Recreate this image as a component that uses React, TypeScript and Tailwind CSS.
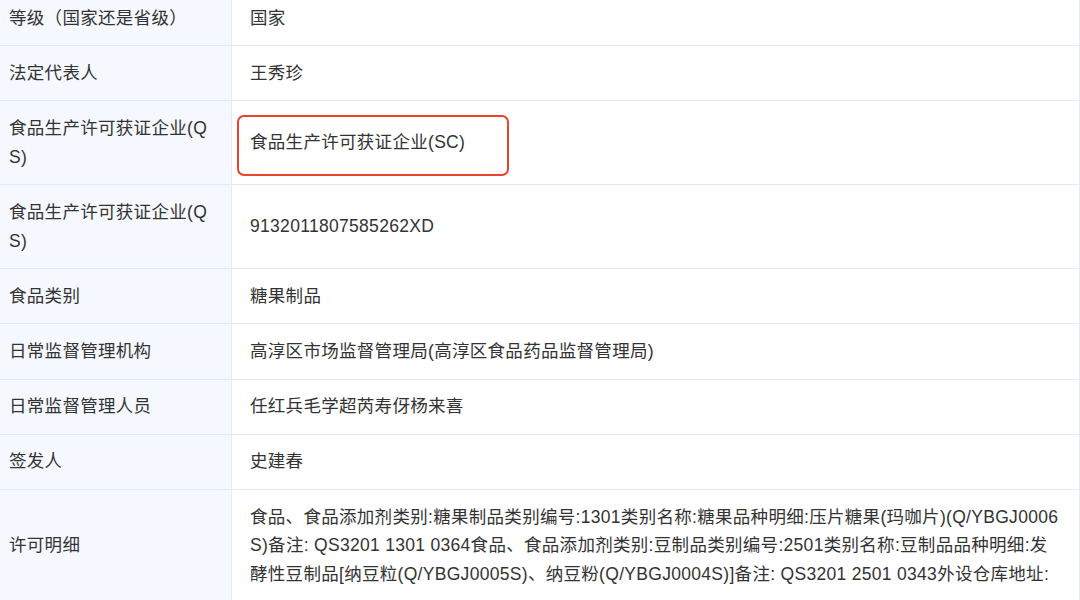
import React from "react";

type Row = { label: React.ReactNode; value: React.ReactNode; boxed?: boolean };

const rows: Row[] = [
  { label: "等级（国家还是省级）", value: "国家" },
  { label: "法定代表人", value: "王秀珍" },
  {
    label: (
      <>
        食品生产许可获证企业(Q
        <br />
        S)
      </>
    ),
    value: "食品生产许可获证企业(SC)",
    boxed: true,
  },
  {
    label: (
      <>
        食品生产许可获证企业(Q
        <br />
        S)
      </>
    ),
    value: "9132011807585262XD",
  },
  { label: "食品类别", value: "糖果制品" },
  { label: "日常监督管理机构", value: "高淳区市场监督管理局(高淳区食品药品监督管理局)" },
  { label: "日常监督管理人员", value: "任红兵毛学超芮寿伢杨来喜" },
  { label: "签发人", value: "史建春" },
  {
    label: "许可明细",
    value: (
      <>
        <span className="block whitespace-nowrap">
          食品、食品添加剂类别:糖果制品类别编号:1301类别名称:糖果品种明细:压片糖果(玛咖片)(Q/YBGJ0006
        </span>
        <span className="block whitespace-nowrap">
          S)备注: QS3201 1301 0364食品、食品添加剂类别:豆制品类别编号:2501类别名称:豆制品品种明细:发
        </span>
        <span className="block whitespace-nowrap">
          酵性豆制品[纳豆粒(Q/YBGJ0005S)、纳豆粉(Q/YBGJ0004S)]备注: QS3201 2501 0343外设仓库地址:
        </span>
      </>
    ),
  },
];

export default function App() {
  return (
    <div
      className="w-[1080px] h-[600px] overflow-hidden bg-white text-[#333333]"
      style={{ fontFamily: '"Liberation Sans", "Noto Sans CJK SC", sans-serif' }}
    >
      <div className="-mt-[9px] border-r border-[#e4ebf6] text-[17.5px] leading-[28.8px] tracking-[0.3px]">
        {rows.map((r, i) => (
          <div key={i} className="flex border-b border-[#e4ebf6]">
            <div className="w-[232px] shrink-0 bg-[#f5f8fe] border-r border-[#e4ebf6] pl-[9px] pr-[4px] py-[12.7px] flex items-center">
              <div>{r.label}</div>
            </div>
            <div className="relative flex-1 pl-[18px] pr-[10px] py-[12.7px] flex items-center">
              <div>{r.value}</div>
              {r.boxed && (
                <div className="absolute left-[5px] top-[14px] w-[272px] h-[61px] border-2 border-[#e8432d] rounded-[7px]" />
              )}
            </div>
          </div>
        ))}
      </div>
    </div>
  );
}
